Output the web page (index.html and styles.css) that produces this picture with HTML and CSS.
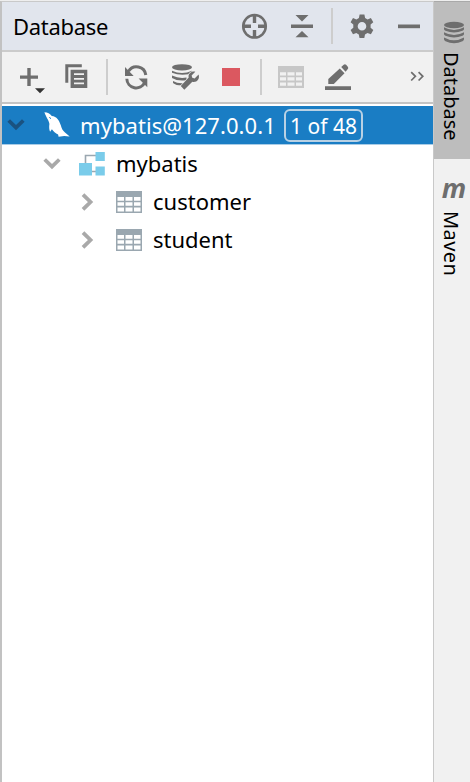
FILE: index.html
```html
<!DOCTYPE html>
<html lang="en">
  <head>
    <meta charset="utf-8">
    <meta name="viewport" content="width=device-width, initial-scale=1">
    <title>Database</title>
    <link rel="stylesheet" href="styles.css">
  </head>
  <body>
    <main class="panel">
      <header class="panel-header">
        <h1>Database</h1>
        <svg class="icon locate" viewBox="0 0 28 28"><circle cx="14.5" cy="14.3" r="11.3" fill="none" stroke="#6e6e6e" stroke-width="2.5"/><path d="M14.5 4v7M14.5 18v7M4 14.3h7M18 14.3h7" stroke="#6e6e6e" stroke-width="3.4"/></svg>
        <svg class="icon collapse" viewBox="0 0 28 28"><path d="M7.5 3h13l-6.5 6.500zM3 12.500h22v3.600H3zM14 19l6.500 6.300h-13z"/></svg>
        <i class="divider"></i>
        <svg class="icon gear" viewBox="0 0 28 28"><path fill-rule="evenodd" d="M11.6 2.4h4.8l.7 3.6 2.5 1.4 3.3-1.3 2.4 4.1-2.7 2.4v3.2l2.7 2.3-2.4 4.2-3.4-1.2-2.5 1.4-.7 3.4h-4.8l-.7-3.4-2.5-1.4-3.3 1.2-2.4-4.2 2.7-2.3v-3.2l-2.7-2.4L5 6.1l3.4 1.3L10.9 6zM14 9.9a4.3 4.3 0 1 0 0 8.6 4.3 4.3 0 0 0 0-8.6z"/></svg>
        <svg class="icon hide" viewBox="0 0 28 28"><path d="M3 12.500h22v3.700H3z"/></svg>
      </header>
      <div class="toolbar">
        <svg class="icon add" viewBox="0 0 28 28"><path d="M8.300 5h3.400v7.400H19v3.400h-7.300v7.300H8.300v-7.300H1v-3.400h7.300z"/><path d="M16 25.200h10l-5 5z" fill="#333"/></svg>
        <svg class="icon copy" viewBox="0 0 28 28"><path d="M2.300 1.300h16.500v3H5.300v15.500h-3z"/><path fill-rule="evenodd" d="M7.600 6.800h16.700v18.300H7.600zM11 10.200v1.800h10v-1.800zm0 4.700v1.800h10v-1.800zm0 4.600v1.800h10v-1.800z"/></svg>
        <i class="divider"></i>
        <svg class="icon refresh" viewBox="0 0 28 28"><g fill="none" stroke="#6e6e6e" stroke-width="3"><path d="M5.500 8.300A9.400 9.400 0 0 1 22.800 12"/><path d="M21.700 19.500A9.400 9.400 0 0 1 3.800 15.800"/></g><path d="M2 4v8.900h8.700zM24.300 24.300v-8.900h-8.700z"/></svg>
        <svg class="icon db-tools" viewBox="0 0 28 28"><ellipse cx="11" cy="4.300" rx="10" ry="3.100"/><path d="M1 7.800q10 4.600 20 0v1.300l-3.500 2.100Q8 12.600 1 9.700zM1 12.600q7 3.400 14.500 2v2.700Q6.500 18.500 1 14.900zM2 18q5 3 11.600 2.100l-2.300 2.300Q5 22.500 2 19.900z"/><path stroke="#f1f1f1" stroke-width="1.200" paint-order="stroke" d="M27.600 11.500l-4 4-2.300-.7-.7-2.300 3.700-3.800c-3.500-.9-7.500 1.700-6.600 5.900l-7.900 8.400 3.500 3.700 8-7.900c4.200 1.100 7.900-2.700 6.300-7.300z"/></svg>
        <svg class="icon stop" viewBox="0 0 28 28"><path d="M5 5h18v18H5z" fill="#db5860"/></svg>
        <i class="divider"></i>
        <svg class="icon table-off" viewBox="0 0 28 28"><path fill="#c7c7c7" fill-rule="evenodd" d="M1 3h26v22H1zM3 9.300v3.300h6V9.300zm7.500 0v3.300h7V9.300zm8.500 0v3.300h6V9.300zM3 14.300v3.300h6v-3.300zm7.500 0v3.300h7v-3.300zm8.500 0v3.300h6v-3.300zM3 19.500v3.300h6v-3.300zm7.500 0v3.300h7v-3.300zm8.500 0v3.300h6v-3.300z"/></svg>
        <svg class="icon edit" viewBox="0 0 28 28"><path d="M1 23.300h26v3.600H1zM4.300 15.900L15.800 5.400l4.700 4.800L9.800 21H4.300zM17.200 4.100l2.500-2.300q1.200-1.100 2.400 0l1.700 1.900q1 1.200 0 2.300l-2.200 2.800z"/></svg>
        <svg class="icon more" viewBox="0 0 28 28"><path d="M8.200 9.100l4.200 4.200-4.200 4.200M15.600 9.100l4.200 4.200-4.200 4.200" fill="none" stroke="#6e6e6e" stroke-width="1.700"/></svg>
      </div>
      <div class="tree">
        <div class="row selected">
          <svg class="arrow" viewBox="0 0 18 18"><path d="M1.700 4.500L9 11.500l7.300-7" stroke="#1a5280"/></svg>
          <svg class="icon dolphin" viewBox="0 0 28 28"><path fill="#fff" d="M2.400 1.300c3.200.2 5.700 1.500 7.400 3.600 4.900.3 7.500 4.300 8.900 9.200.8 3.300 2.200 6 4.300 7.300l4.700 4.200-5.500-.5-5.600.7-.5-2.400c-2.500-1.100-4.800-3.100-6.200-5.200l-1.800 2.500C7 18.600 7 15.600 7.400 13 7.200 9.900 3.900 5.900 2.400 1.300z"/><path d="M7.300 6.400L9 7.600" stroke="#1a7dc4"/></svg>
          <span class="label source">mybatis@127.0.0.1</span>
          <span class="count">1 of 48</span>
        </div>
        <div class="row schema">
          <svg class="arrow" viewBox="0 0 18 18"><path d="M1.700 4.500L9 11.500l7.300-7"/></svg>
          <svg class="icon" viewBox="0 0 28 28"><path d="M7.500 14V5.500h12M13 21.500h6" fill="none" stroke="#9aa7b0" stroke-width="1.600"/><path fill="#7accea" d="M1 13h13v12.500H1zM17.500 2h9.300v9h-9.300zM17.500 16.500h9.300v9h-9.300z"/></svg>
          <span class="label schema-name">mybatis</span>
        </div>
        <div class="row table">
          <svg class="arrow" viewBox="0 0 18 18"><path d="M5 1.700L12.500 9 5 16.300"/></svg>
          <svg class="icon" viewBox="0 0 28 28"><path fill="#9aa7b0" fill-rule="evenodd" d="M1 3h26v22H1zM2.500 9v3.700H9V9zm8 0v3.700h7V9zM19 9v3.700h6.500V9zM2.500 14.200v3.600H9v-3.600zm8 0v3.600h7v-3.600zm8.500 0v3.600h6.500v-3.600zM2.500 19.400v4H9v-4zm8 0v4h7v-4zm8.500 0v4h6.500v-4z"/></svg>
          <span class="label customer">customer</span>
        </div>
        <div class="row table">
          <svg class="arrow" viewBox="0 0 18 18"><path d="M5 1.700L12.500 9 5 16.300"/></svg>
          <svg class="icon" viewBox="0 0 28 28"><path fill="#9aa7b0" fill-rule="evenodd" d="M1 3h26v22H1zM2.500 9v3.700H9V9zm8 0v3.700h7V9zM19 9v3.700h6.500V9zM2.500 14.200v3.600H9v-3.600zm8 0v3.600h7v-3.600zm8.500 0v3.600h6.500v-3.600zM2.500 19.400v4H9v-4zm8 0v4h7v-4zm8.500 0v4h6.500v-4z"/></svg>
          <span class="label student">student</span>
        </div>
      </div>
    </main>
    <nav class="stripe">
      <div class="tab active">
        <svg class="tab-icon" viewBox="0 0 22 24"><ellipse cx="11" cy="4" rx="10" ry="3.300"/><path d="M1 6.200q10 5.600 20 0V8q0 1-1.500 1.800-8.500 3.600-17 0Q1 9 1 8zM1 11.200q10 5.600 20 0V13q0 1-1.500 1.800-8.500 3.600-17 0Q1 14 1 13zM1 16.400q10 5.600 20 0v1.900q0 1-1.500 2-8.500 3.800-17 0-1.500-1-1.500-2z"/></svg>
        <span class="tab-label">Database</span>
      </div>
      <div class="tab maven">
        <span class="maven-icon">m</span>
        <span class="tab-label">Maven</span>
      </div>
    </nav>
  </body>
</html>
```

FILE: styles.css
```css
* {
  box-sizing: border-box;
}
body {
  display: flex;
  height: 782px;
  margin: 0;
  overflow: hidden;
  background: #fff;
  border-top: 1px solid #eee;
  color: #000;
  font-family: "Noto Sans", "Open Sans", sans-serif;
  font-size: 22px;
  line-height: 1;
}
.panel {
  width: 433px;
  border-top: 1px solid #c9c9c9;
  border-left: 2px solid #c2c2c2;
}
.panel-header, .toolbar, .row {
  display: flex;
  align-items: center;
}
.panel-header {
  height: 50px;
  padding-left: 11px;
  background: #e1e5ed;
  border-bottom: 2px solid #cbcbcb;
}
h1 {
  width: 97px;
  margin: 0 130px 0 0;
  font-size: 22px;
  font-weight: normal;
  letter-spacing: -0.3px;
}
.icon {
  width: 28px;
  height: 28px;
  flex-shrink: 0;
  overflow: visible;
  fill: #6e6e6e;
}
.divider {
  width: 2px;
  height: 36px;
  flex-shrink: 0;
  background: #cdcdcd;
}
.collapse {
  margin: 0 15px 0 20px;
}
.gear {
  margin: 0 19px 0 15px;
}
.toolbar {
  height: 52px;
  padding-left: 17px;
  background: #f1f1f1;
  border-bottom: 2px solid #c4c4c4;
}
.copy {
  margin: 0 15px 0 16px;
}
.refresh {
  margin: 0 20px 0 15px;
}
.stop {
  margin: 0 15px 0 18px;
}
.table-off {
  margin: 0 19px 0 15px;
}
.more {
  margin-left: 51px;
}
.tree {
  padding-top: 2px;
}
.row {
  height: 38px;
  padding: 0 0 1px 5px;
}
.row .arrow {
  width: 18px;
  height: 18px;
  margin-right: 17px;
  flex-shrink: 0;
  fill: none;
  stroke: #a9a9a9;
  stroke-width: 3.8;
}
.row.selected {
  height: 39px;
  padding-bottom: 0;
  background: #1a7dc4;
  border-bottom: 1px solid #a9cce6;
  color: #fff;
}
.row.schema {
  padding-left: 41px;
}
.row.table {
  padding-left: 76px;
}
.table .icon {
  margin-left: 2px;
}
.label {
  margin-left: 10px;
  padding-bottom: 2px;
  white-space: nowrap;
}
.selected .label {
  width: 196px;
  padding-bottom: 1px;
  letter-spacing: 0.06px;
}
.count {
  width: 79px;
  height: 33px;
  margin-left: 8px;
  border: 2px solid #b9d1e4;
  border-radius: 6px;
  font-size: 21px;
  line-height: 30px;
  text-align: center;
  white-space: nowrap;
}
.stripe {
  width: 37px;
  background: #f1f1f1;
  border-left: 1px solid #c9c9c9;
}
.tab {
  display: flex;
  flex-direction: column;
  align-items: center;
  padding-left: 4px;
}
.tab-label {
  margin-right: 6px;
  font-size: 20px;
  line-height: 24px;
  writing-mode: vertical-rl;
}
.tab.active {
  height: 158px;
  padding-top: 19px;
  background: #bdbdbd;
  border-top: 1px solid #a9a9a9;
}
.tab-icon {
  width: 22px;
  height: 24px;
  margin-bottom: 7px;
  fill: #6e6e6e;
}
.maven {
  padding-top: 12px;
}
.maven .tab-label {
  letter-spacing: 0.4px;
}
.maven-icon {
  height: 40px;
  color: #6e6e6e;
  font-size: 27px;
  font-style: italic;
  font-weight: bold;
  line-height: 34px;
}
```
